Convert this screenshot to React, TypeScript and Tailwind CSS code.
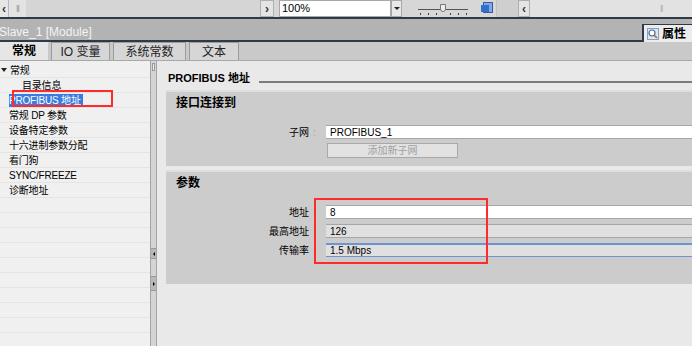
const font = { fontFamily: '"Liberation Sans", "Noto Sans CJK SC", sans-serif' };

const treeItems = [
  { label: "目录信息", indent: true },
  { label: "PROFIBUS 地址", selected: true },
  { label: "常规 DP 参数" },
  { label: "设备特定参数" },
  { label: "十六进制参数分配" },
  { label: "看门狗" },
  { label: "SYNC/FREEZE" },
  { label: "诊断地址" },
];

function Toolbar() {
  return (
    <div className="flex h-[17px] items-stretch bg-[#d7d7d7] text-[11px] text-black">
      <div className="flex w-[9px] items-center justify-center border-r border-[#b8b8b8] bg-[#e6e6e6] text-[12px] font-bold text-[#333]">‹</div>
      <div className="flex w-[17px] items-center justify-center bg-[#e3e3e3] text-[7px] tracking-[-1px] text-[#888]">|||</div>
      <div className="flex-1 bg-[#d5d5d5]" />
      <div className="flex w-[14px] items-center justify-center border border-[#b0b0b0] bg-[#e4e4e4] text-[12px] font-bold text-[#333]">›</div>
      <div className="w-[5px]" />
      <div className="flex w-[112px] items-center border border-[#a8a8a8] bg-white pl-[2px]">100%</div>
      <div className="flex w-[11px] items-center justify-center border border-[#a8a8a8] bg-[#e8e8e8]">
        <div className="h-0 w-0 border-x-[3px] border-t-[3px] border-x-transparent border-t-[#222]" />
      </div>
      <div className="relative w-[78px]">
        <div className="absolute left-[16px] top-[9px] h-px w-[50px] bg-[#555]" />
        <div className="absolute left-[38px] top-[4px] h-[8px] w-[6px] rounded-b-[3px] border border-[#777] bg-[#eee]" />
        {[18, 26, 34, 48, 56, 64].map((x) => (
          <div key={x} className="absolute top-[13px] h-[2px] w-px bg-[#444]" style={{ left: x }} />
        ))}
      </div>
      <div className="relative w-[16px]">
        <div className="absolute left-[3px] top-[2px] h-[11px] w-[10px] border border-[#3a5a9a] bg-[#7fa8e8]" />
        <div className="absolute left-[1px] top-[5px] h-[7px] w-[8px] bg-[#2f6fd0]" />
      </div>
      <div className="w-[22px] border-l border-[#c0c0c0] bg-[#cfcfcf]" />
      <div className="flex w-[12px] items-center justify-center border border-[#b0b0b0] bg-[#e4e4e4] text-[12px] font-bold text-[#333]">‹</div>
      <div className="flex w-[162px] items-center justify-end bg-[#e2e2e2] pr-[30px] text-[7px] tracking-[-1px] text-[#999]">||</div>
    </div>
  );
}

function TitleBar() {
  return (
    <div className="relative flex h-[25px] items-center border-y-2 border-[#2e3a4a] bg-[#b3b3b3]">
      <div className="ml-[-1px] mt-[4px] text-[12px] text-[#f4f4f4]">Slave_1 [Module]</div>
      <div className="absolute bottom-[-2px] right-0 flex h-[18px] w-[50px] items-center gap-[3px] border-l-2 border-t border-[#2e3a4a] bg-[#ececec] pl-[3px]">
        <svg width="12" height="12" viewBox="0 0 12 12">
          <rect x="0.5" y="0.5" width="11" height="11" fill="#dbe6f5" stroke="#8aa0c0" />
          <circle cx="5" cy="5" r="3" fill="#fff" stroke="#4a6a9a" strokeWidth="1.2" />
          <path d="M7 7l3 3" stroke="#b07020" strokeWidth="1.6" />
        </svg>
        <span className="text-[12px] font-bold text-black">属性</span>
      </div>
    </div>
  );
}

function Tabs() {
  const tabs = ["IO 变量", "系统常数", "文本"];
  return (
    <div className="flex h-[19px] items-end border-b border-[#a8a8a8] bg-[#c9c9c9] text-[12px]">
      <div className="flex h-[19px] w-[48px] items-center justify-center bg-[#e6e6e6] pt-[1px] font-bold text-black">常规</div>
      {tabs.map((t, i) => (
        <div
          key={t}
          className={`ml-[3px] flex h-[18px] items-center justify-center border border-b-0 border-[#9c9c9c] bg-[#d6d6d6] pt-[1px] text-[#222] ${
            i === 0 ? "w-[59px]" : i === 1 ? "w-[73px]" : "w-[50px]"
          }`}
        >
          {t}
        </div>
      ))}
    </div>
  );
}

function Tree() {
  return (
    <div className="relative w-[150px] bg-[#f0f0f0] pt-[2px] text-[10px] tracking-[-0.2px] text-black">
      <div className="flex h-[15px] items-center border-b border-[#e4e4e4]">
        <div className="ml-[1px] mr-[3px] h-0 w-0 border-x-[3px] border-t-[4px] border-x-transparent border-t-[#222]" />
        <span>常规</span>
      </div>
      {treeItems.map((item) => (
        <div key={item.label} className="flex h-[15px] items-center border-b border-[#e4e4e4]">
          <span
            className={`${item.indent ? "ml-[22px]" : "ml-[9px]"} ${
              item.selected ? "bg-[#3a7be0] pr-[2px] text-white" : ""
            } leading-[13px]`}
          >
            {item.label}
          </span>
        </div>
      ))}
      {Array.from({ length: 10 }).map((_, i) => (
        <div key={i} className="h-[15px] border-b border-[#e4e4e4]" />
      ))}
      <div className="absolute left-[12px] top-[29px] h-[17px] w-[101px] border-2 border-[#ff2b2b]" />
    </div>
  );
}

function Splitter() {
  return (
    <div className="relative w-[7px] border-x border-[#a4a4a4] bg-[#d4d4d4]">
      <div className="absolute left-[1px] top-[2px] h-[8px] w-[3px] border border-[#999] bg-[#eee]" />
      <div className="absolute left-0 top-[187px] flex h-[11px] w-[5px] items-center justify-center border-y border-[#999] bg-[#b8b8b8]">
        <div className="h-0 w-0 border-y-[2px] border-r-[2px] border-y-transparent border-r-black" />
      </div>
      <div className="absolute left-0 top-[215px] flex h-[15px] w-[5px] items-center justify-center border-y border-[#999] bg-[#b8b8b8]">
        <div className="h-0 w-0 border-y-[2px] border-l-[2px] border-y-transparent border-l-black" />
      </div>
    </div>
  );
}

function Field({ label, value, kind }: { label: string; value: string; kind: "white" | "gray" | "blue" }) {
  const box =
    kind === "white"
      ? "bg-white border-t border-b border-[#a6a6a6]"
      : kind === "gray"
      ? "bg-[#e0e0e0] border-t border-b border-[#a6a6a6]"
      : "bg-[#e0e0e0] border-t-2 border-b border-[#6f92d4]";
  return (
    <div className="flex h-[14px] items-center">
      <div className="w-[143px] text-right text-[10px] text-black">{label}</div>
      <div className="w-[17px] pl-[4px] text-[10px] text-[#a0a0a0]">:</div>
      <div className={`flex h-[14px] flex-1 items-center pl-[4px] text-[10px] text-black ${box}`}>{value}</div>
    </div>
  );
}

function Content() {
  return (
    <div className="flex-1 bg-[#e9e9e9] pl-[9px]">
      <div className="flex h-[29px] items-center pl-[2px] pt-[6px]">
        <span className="text-[11px] font-bold text-black">PROFIBUS 地址</span>
        <div className="ml-[9px] mt-[6px] h-[2px] flex-1 bg-[#7a7a7a]" />
      </div>
      <div className="h-[76px] border-t-2 border-[#dedede] bg-[#cccccc]">
        <div className="pl-[10px] pt-[2px] text-[12px] font-bold text-black">接口连接到</div>
        <div className="mt-[13px]">
          <Field label="子网" value="PROFIBUS_1" kind="white" />
        </div>
        <div className="ml-[161px] mt-[4px] flex h-[15px] w-[131px] items-center justify-center border border-[#a8a8a8] bg-[#e2e2e2] text-[10px] text-[#a0a0a0]">
          添加新子网
        </div>
      </div>
      <div className="h-[4px]" />
      <div className="relative h-[114px] border-t-2 border-[#dedede] bg-[#cccccc]">
        <div className="pl-[10px] pt-[2px] text-[12px] font-bold text-black">参数</div>
        <div className="mt-[13px] flex flex-col gap-[5px]">
          <Field label="地址" value="8" kind="white" />
          <Field label="最高地址" value="126" kind="gray" />
          <Field label="传输率" value="1.5 Mbps" kind="blue" />
        </div>
        <div className="absolute left-[148px] top-[26px] h-[66px] w-[174px] border-2 border-[#ff2b2b]" />
      </div>
    </div>
  );
}

export default function App() {
  return (
    <div className="h-[346px] w-[692px] overflow-hidden bg-[#e9e9e9]" style={font}>
      <Toolbar />
      <TitleBar />
      <Tabs />
      <div className="flex h-[285px]">
        <Tree />
        <Splitter />
        <Content />
      </div>
    </div>
  );
}
